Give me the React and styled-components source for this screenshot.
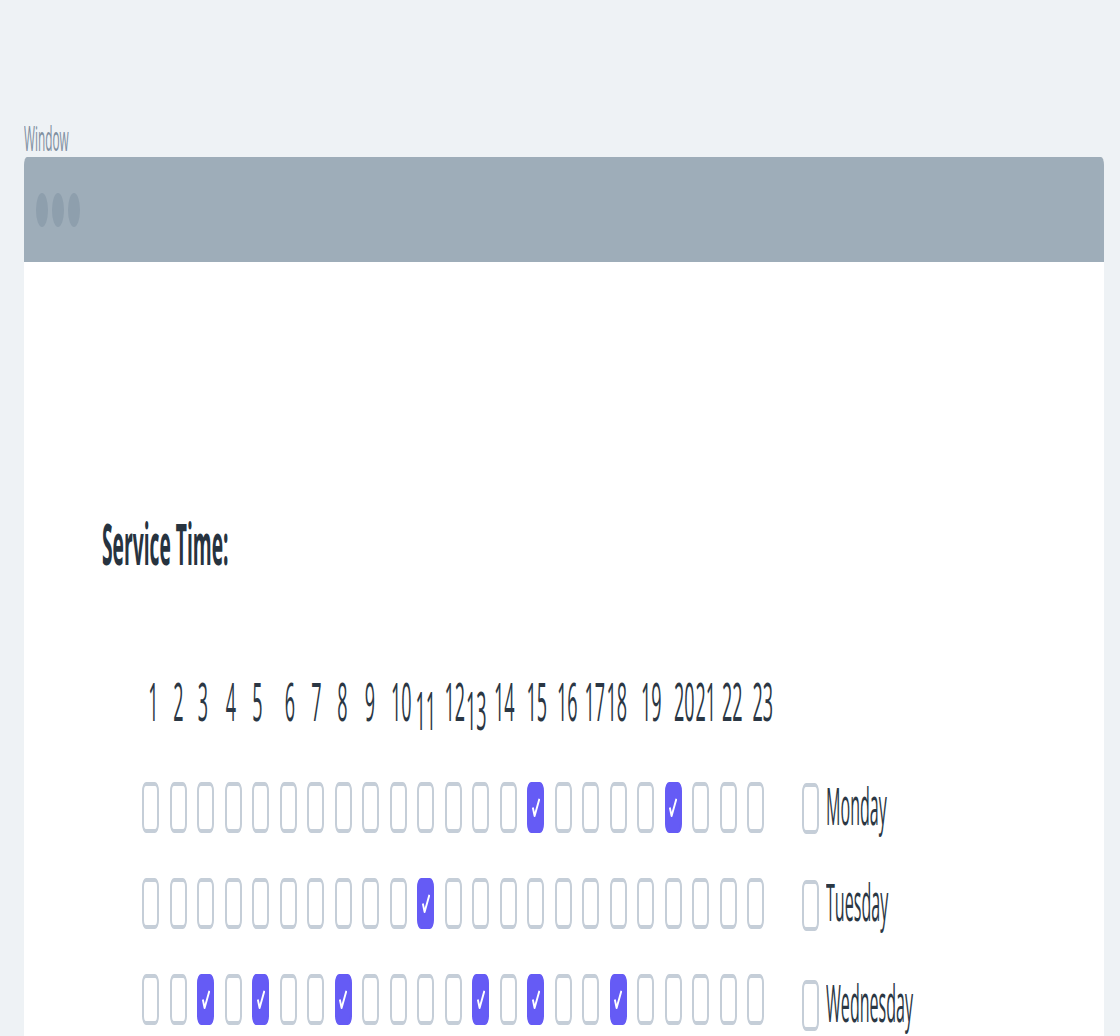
import React from 'react';
import styled, { createGlobalStyle, css } from 'styled-components';

const GlobalStyle = createGlobalStyle`
  html, body { margin: 0; padding: 0; background: #eef2f5; }
  body { font-family: "Open Sans", "Liberation Sans", sans-serif; overflow: hidden; }
`;

const stretched = css`
  display: inline-block;
  line-height: 1;
  white-space: nowrap;
`;

const Page = styled.div`
  padding: 117px 16px 0 24px;
  min-height: 1036px;
  box-sizing: border-box;
`;

const LabelRow = styled.div`
  height: 40px;
`;

const LabelText = styled.span`
  ${stretched};
  font-size: 16px;
  color: #7f8fa0;
  transform: scale(0.74, 2.19);
  transform-origin: left top;
`;

const Frame = styled.div`
  background: #ffffff;
  border-radius: 3px 3px 0 0 / 8px 8px 0 0;
  overflow: hidden;
  min-height: 900px;
`;

const TitleBar = styled.div`
  height: 105px;
  background: #9eadb9;
  display: flex;
  align-items: center;
  gap: 4px;
  padding-left: 12px;
  box-sizing: border-box;
`;

const Dot = styled.span`
  width: 12px;
  height: 34px;
  border-radius: 50%;
  background: #8e9fad;
`;

const Body = styled.div`
  padding: 252px 0 0 78px;
`;

const HeadingRow = styled.div`
  height: 160px;
`;

const Heading = styled.span`
  ${stretched};
  font-size: 26px;
  font-weight: 700;
  color: #27333f;
  transform: scale(0.74, 2.21);
  transform-origin: left top;
`;

const HoursRow = styled.div`
  display: grid;
  grid-template-columns: repeat(23, 27.5px);
  height: 108px;
  margin-left: 35px;
`;

const HourCell = styled.div`
  display: flex;
  justify-content: center;
`;

const HourText = styled.span`
  ${stretched};
  font-size: 24px;
  color: #2b3744;
  transform: translate(${p => p.$dx}px, ${p => p.$dy}px) scale(0.75, 2.22);
  transform-origin: center top;
`;

const Days = styled.div`
  display: flex;
  flex-direction: column;
  gap: 43.5px;
`;

const DayRow = styled.div`
  display: flex;
  align-items: flex-start;
  margin-left: 40px;
`;

const Boxes = styled.div`
  display: flex;
  gap: 10.5px;
`;

const Box = styled.span`
  width: 17px;
  height: 51px;
  box-sizing: border-box;
  border-style: solid;
  border-width: 4.5px 2.7px;
  border-color: ${p => (p.$checked ? '#655bf5' : '#c5ced8')};
  background: ${p => (p.$checked ? '#655bf5' : '#ffffff')};
  border-radius: 4px / 9px;
  display: flex;
  align-items: center;
  justify-content: center;
  flex: none;
`;

const Check = styled.svg`
  width: 8px;
  height: 19px;
  display: block;
`;

const DayToggle = styled.div`
  display: flex;
  align-items: flex-start;
  gap: 7px;
  margin-left: 38px;
  margin-top: ${p => p.$shift}px;
`;

const DayName = styled.span`
  ${stretched};
  font-size: 24px;
  color: #2b3744;
  margin-top: -3.5px;
  transform: scale(0.67, 2.16);
  transform-origin: left top;
`;

const hourOffsets = [2.5, 0.5, -3, -2, -3.5, 2, 0.5, -0.5, -1, 2.5, 0, 1, -4.5, -4.5, 1, 3.5, 4, -2, 5.5, 10.5, 5, 3.5, 7];
const dropped = [11, 13];

const days = [
  { name: 'Monday', checked: [15, 20], shift: 1 },
  { name: 'Tuesday', checked: [11], shift: 2 },
  { name: 'Wednesday', checked: [3, 5, 8, 13, 15, 18], shift: 6 },
];

const hours = Array.from({ length: 23 }, (_, i) => i + 1);

function CheckBox({ checked }) {
  return (
    <Box $checked={checked}>
      {checked && (
        <Check viewBox="0 0 8 19" preserveAspectRatio="none">
          <path d="M0.8 9.5 L2.6 18 L7.4 0.8" stroke="#ffffff" strokeWidth="1.9" fill="none" strokeLinejoin="round" />
        </Check>
      )}
    </Box>
  );
}

export default function App() {
  return (
    <>
      <GlobalStyle />
      <Page>
        <LabelRow>
          <LabelText>Window</LabelText>
        </LabelRow>
        <Frame>
          <TitleBar>
            <Dot />
            <Dot />
            <Dot />
          </TitleBar>
          <Body>
            <HeadingRow>
              <Heading>Service Time:</Heading>
            </HeadingRow>
            <HoursRow>
              {hours.map((h, i) => (
                <HourCell key={h}>
                  <HourText $dx={hourOffsets[i]} $dy={dropped.includes(h) ? 9 : 0}>{h}</HourText>
                </HourCell>
              ))}
            </HoursRow>
            <Days>
              {days.map(d => (
                <DayRow key={d.name}>
                  <Boxes>
                    {hours.map(h => (
                      <CheckBox key={h} checked={d.checked.includes(h)} />
                    ))}
                  </Boxes>
                  <DayToggle $shift={d.shift}>
                    <Box />
                    <DayName>{d.name}</DayName>
                  </DayToggle>
                </DayRow>
              ))}
            </Days>
          </Body>
        </Frame>
      </Page>
    </>
  );
}
